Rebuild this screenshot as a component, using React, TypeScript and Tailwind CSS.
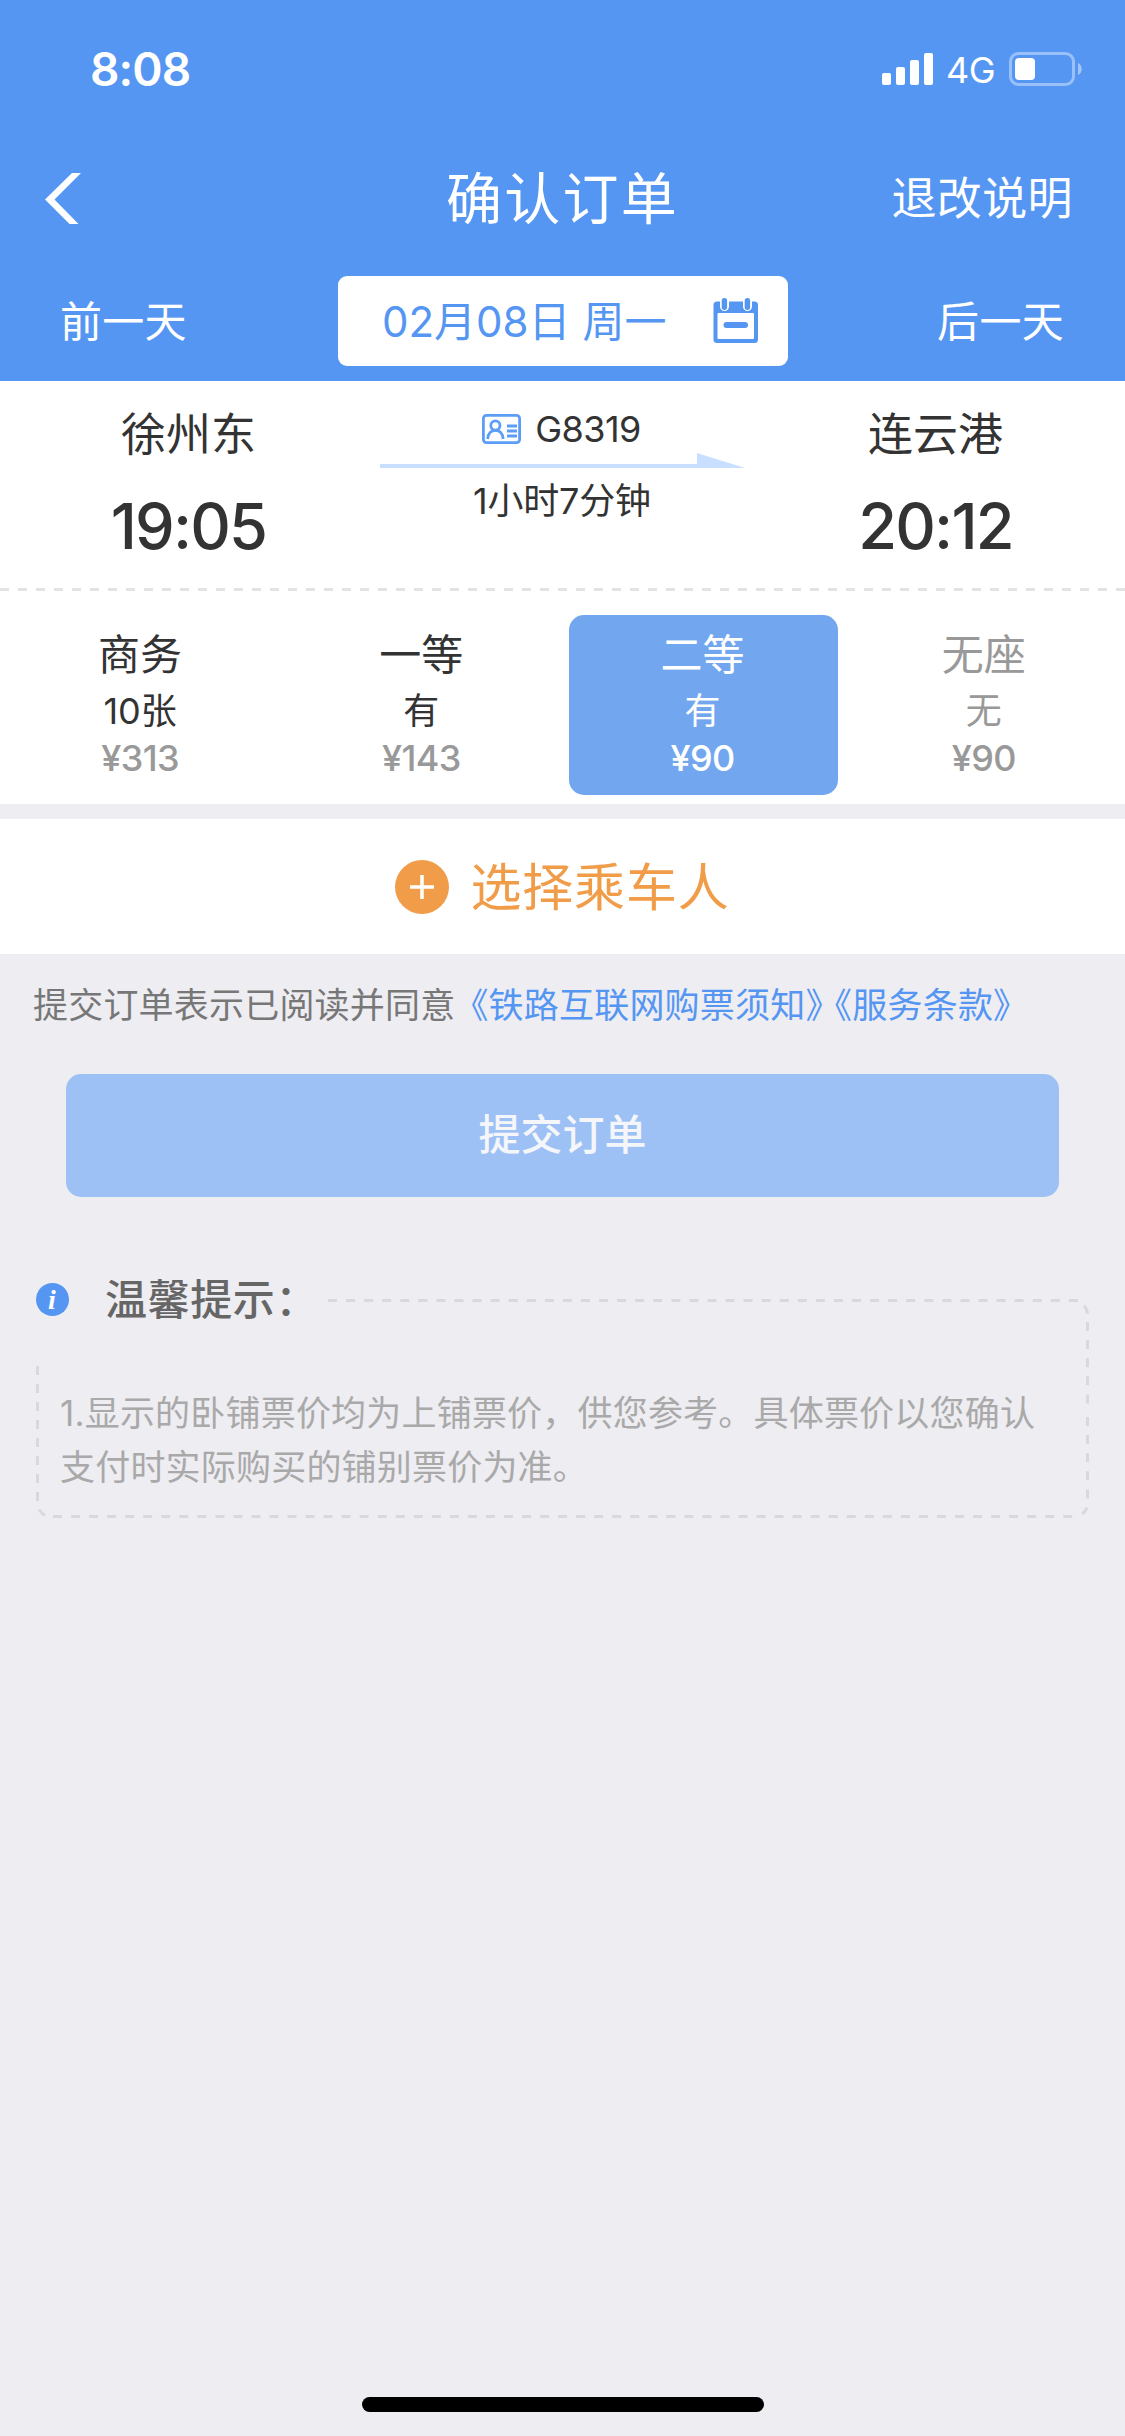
import clsx from 'clsx'

const seats = [
  { name: '商务', left: '10张', price: '¥313' },
  { name: '一等', left: '有', price: '¥143' },
  { name: '二等', left: '有', price: '¥90', selected: true },
  { name: '无座', left: '无', price: '¥90', soldOut: true },
]

const StatusBar = () => (
  <div className="flex h-[138px] items-center justify-between pr-[43px] pl-[90px]">
    <span className="text-[46px] leading-[48px] font-semibold tracking-[-0.9px]">8:08</span>
    <div className="flex items-center">
      <svg className="h-[34px] w-[51px]" viewBox="0 0 51 34" fill="#fff">
        <rect x="0" y="21" width="9" height="12" rx="2" />
        <rect x="14" y="15" width="9" height="18" rx="2" />
        <rect x="28" y="8" width="9" height="25" rx="2" />
        <rect x="42" y="1" width="9" height="32" rx="2" />
      </svg>
      <span className="ml-[13px] w-[63px] pt-[2px] text-[36px] leading-[36px] tracking-[-0.5px]">4G</span>
      <svg className="h-[34px] w-[73px]" viewBox="0 0 73 34">
        <rect x="1.5" y="1.5" width="63" height="31" rx="8" fill="none" stroke="#fff" strokeOpacity="0.4" strokeWidth="3" />
        <rect x="6" y="6" width="20" height="22" rx="4" fill="#fff" />
        <path d="M69 11c5 2 5 10 0 12z" fill="#fff" fillOpacity="0.45" />
      </svg>
    </div>
  </div>
)

const NavBar = () => (
  <div className="grid h-[120px] grid-cols-3 items-center pr-[52px] pl-[45px]">
    <svg className="h-[51px] w-[36px]" viewBox="0 0 36 51" fill="#fff">
      <path d="M0 26.5 27 0h9L9.5 26.5 33.5 51h-9z" />
    </svg>
    <h1 className="pt-[2px] pl-[7px] text-center text-[56px] leading-[60px] tracking-[2.3px]">确认订单</h1>
    <span className="pt-[2px] text-right text-[45px] leading-[48px] tracking-[0.4px]">退改说明</span>
  </div>
)

const CalendarIcon = () => (
  <svg className="h-[46px] w-[46px]" viewBox="0 0 46 46">
    <rect x="0.5" y="3.5" width="44.5" height="41.5" rx="3.5" fill="#5596f3" />
    <rect x="4.5" y="15" width="36.5" height="26" rx="1" fill="#fff" />
    <rect x="7" y="-1" width="9" height="14" rx="4.5" fill="#fff" />
    <rect x="30" y="-1" width="9" height="14" rx="4.5" fill="#fff" />
    <rect x="8.7" y="0" width="5.4" height="12" rx="2.7" fill="#5596f3" />
    <rect x="31.7" y="0" width="5.4" height="12" rx="2.7" fill="#5596f3" />
    <rect x="10.5" y="24" width="24.5" height="6" rx="3" fill="#5596f3" />
  </svg>
)

const DateBar = () => (
  <div className="flex items-center px-[60px] pt-[18px] pb-[15px] text-[42px] leading-[48px]">
    <span className="w-[278px] pt-[2px] tracking-[0.3px]">前一天</span>
    <div className="flex h-[90px] w-[450px] items-center justify-between rounded-[9px] bg-white pr-[29px] pl-[44px] text-[#5596f3]">
      <span className="pt-[2px]">02月08日 周一</span>
      <CalendarIcon />
    </div>
    <span className="w-[276px] pt-[2px] text-right tracking-[0.3px]">后一天</span>
  </div>
)

const IdCardIcon = () => (
  <svg className="h-[30px] w-[39px]" viewBox="0 0 39 30" fill="none" stroke="#5c9df8" strokeWidth="2.8">
    <rect x="1.4" y="1.4" width="36.2" height="27.2" rx="3" />
    <circle cx="13.4" cy="11.5" r="4.6" />
    <path d="M5.6 25c.6-5.5 3.5-8.6 7.8-8.6s7.2 3.1 7.8 8.6M25 12h10M25 17h10M25 22h10" />
  </svg>
)

type StopProps = {
  station: string
  time: string
}

const Stop = ({ station, time }: StopProps) => (
  <div className="flex flex-col items-center pt-[27px] pr-[1px]">
    <span className="text-[45px] leading-[54px]">{station}</span>
    <span className="mt-[32px] text-[63px] leading-[64px] font-medium tracking-[-1.8px]">{time}</span>
  </div>
)

const Trip = () => (
  <section className="grid h-[207px] grid-cols-[378px_1fr_378px] bg-white">
    <Stop station="徐州东" time="19:05" />
    <div className="flex flex-col items-center pt-[24px] text-[36px]">
      <div className="mr-[2px] flex h-[48px] items-center gap-[14px]">
        <IdCardIcon />
        <span className="leading-[44px] tracking-[-0.6px]">G8319</span>
      </div>
      <svg className="h-[15px] w-[365px]" viewBox="0 0 365 15" fill="#c9dfff">
        <path d="M0 11h317V0l48 15H0z" />
      </svg>
      <span className="mt-[9px] mr-[1px] leading-[48px] tracking-[-0.2px]">1小时7分钟</span>
    </div>
    <Stop station="连云港" time="20:12" />
  </section>
)

const SeatList = () => (
  <section className="bg-white">
    <div className="h-[3px] bg-[repeating-linear-gradient(90deg,#e3e3e3_0_9px,transparent_9px_18px)]" />
    <div className="grid h-[213px] grid-cols-4 pt-[24px]">
      {seats.map((seat) => (
        <div
          key={seat.name}
          className={clsx(
            'mx-[6px] flex h-[180px] flex-col items-center rounded-[15px] pt-[16px] pr-[1px]',
            seat.selected && 'bg-[#72a7ef] text-white',
            seat.soldOut && 'text-[#999]',
          )}
        >
          <span className="text-[42px] leading-[48px]">{seat.name}</span>
          <span className="mt-[12px] text-[36px] leading-[40px]">{seat.left}</span>
          <span
            className={clsx(
              'mt-[9px] text-[36px] leading-[36px] font-medium tracking-[-0.6px]',
              !seat.selected && 'text-[#999]',
            )}
          >
            {seat.price}
          </span>
        </div>
      ))}
    </div>
  </section>
)

const AddPassenger = () => (
  <section className="mt-[15px] flex h-[135px] items-center justify-center gap-[21px] bg-white text-[#f09c48]">
    <svg className="h-[54px] w-[54px]" viewBox="0 0 54 54">
      <circle cx="27" cy="27" r="27" fill="#f09c48" />
      <path d="M15 27h24M27 15v24" stroke="#fff" strokeWidth="3.5" />
    </svg>
    <span className="pt-[2px] text-[51px] leading-[60px] tracking-[0.8px]">选择乘车人</span>
  </section>
)

const Tips = () => (
  <section className="relative mx-[36px] mt-[78px] h-[243px]">
    <svg
      className="absolute inset-0 h-[243px] w-[1053px]"
      viewBox="0 0 1053 243"
      fill="none"
      stroke="#d9d9d9"
      strokeWidth="3"
    >
      <path d="M292 25.5H1042" strokeDasharray="9 9.07" />
      <path d="M1051.5 47V129M1051.5 142V225" strokeDasharray="9 9.1" />
      <path d="M17 241.5H1038" strokeDasharray="9 9.04" />
      <path d="M1.5 91V228" strokeDasharray="9 9" />
      <path d="M1048 30.5q3 3.5 3.5 8M1051 232.5q-1.5 4-4.5 6.5M3 234.5q2 3.5 6 6" />
    </svg>
    <div className="flex h-[48px] items-center">
      <span className="flex h-[33px] w-[33px] items-center justify-center rounded-full bg-[#5596f3] pr-[1px] font-['Liberation_Serif',serif] text-[28px] leading-[33px] font-bold text-white italic">
        i
      </span>
      <h2 className="ml-[36px] pt-[2px] text-[42px] leading-[48px] font-medium tracking-[0.6px] text-[#666]">
        温馨提示：
      </h2>
    </div>
    <p className="mt-[63px] ml-[24px] w-[988px] text-[35px] leading-[54px] tracking-[0.2px] text-[#a9a9a9]">
      1.显示的卧铺票价均为上铺票价，供您参考。具体票价以您确认支付时实际购买的铺别票价为准。
    </p>
  </section>
)

const App = () => {
  return (
    <main className="flex h-[2436px] w-[1125px] flex-col overflow-hidden bg-[#eeedf2] font-['Inter','Noto_Sans_CJK_SC',sans-serif] text-[#333]">
      <header className="h-[381px] bg-[#5596f3] text-white">
        <StatusBar />
        <NavBar />
        <DateBar />
      </header>
      <Trip />
      <SeatList />
      <AddPassenger />
      <p className="mt-[27px] pl-[33px] text-[35px] leading-[48px] tracking-[0.2px] whitespace-nowrap text-[#777]">
        提交订单表示已阅读并同意
        <a className="-ml-[2px] text-[#5596f3]">《铁路互联网购票须知》</a>
        <a className="-ml-[6px] text-[#5596f3]">《服务条款》</a>
      </p>
      <button className="mx-[66px] mt-[45px] h-[123px] rounded-[15px] bg-[#9ec1f5] pb-[2px] text-[42px] leading-[48px] font-medium text-[#f5f6fa]">
        提交订单
      </button>
      <Tips />
      <div className="mx-auto mt-auto mb-[24px] h-[15px] w-[402px] rounded-full bg-black" />
    </main>
  )
}

export default App
